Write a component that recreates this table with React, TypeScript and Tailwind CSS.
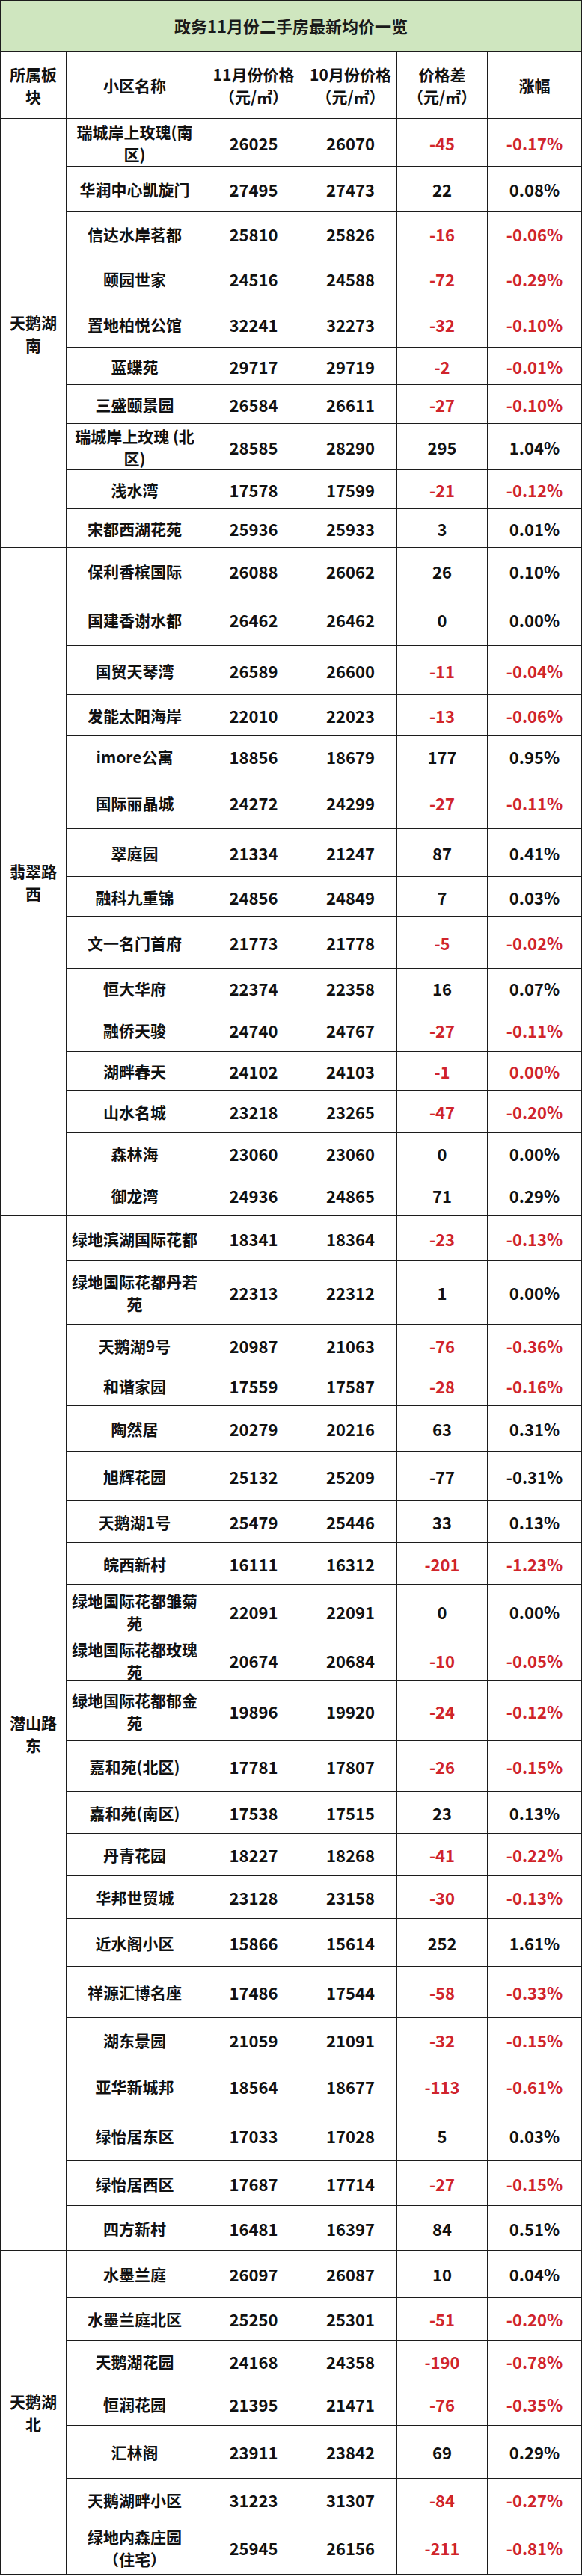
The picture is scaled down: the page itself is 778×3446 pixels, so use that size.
import React from 'react';

type Row = {
  name: string;
  nov: string;
  oct: string;
  diff: string;
  pct: string;
  red?: boolean;
  h: string;
};

type Group = {
  area: string;
  rows: Row[];
};

const groups: Group[] = [
  {
    area: '天鹅湖南',
    rows: [
      { name: '瑞城岸上玫瑰(南\n区)', nov: '26025', oct: '26070', diff: '-45', pct: '-0.17%', red: true, h: 'h-[64px]' },
      { name: '华润中心凯旋门', nov: '27495', oct: '27473', diff: '22', pct: '0.08%', h: 'h-[60px]' },
      { name: '信达水岸茗都', nov: '25810', oct: '25826', diff: '-16', pct: '-0.06%', red: true, h: 'h-[60px]' },
      { name: '颐园世家', nov: '24516', oct: '24588', diff: '-72', pct: '-0.29%', red: true, h: 'h-[60px]' },
      { name: '置地柏悦公馆', nov: '32241', oct: '32273', diff: '-32', pct: '-0.10%', red: true, h: 'h-[62px]' },
      { name: '蓝蝶苑', nov: '29717', oct: '29719', diff: '-2', pct: '-0.01%', red: true, h: 'h-[50px]' },
      { name: '三盛颐景园', nov: '26584', oct: '26611', diff: '-27', pct: '-0.10%', red: true, h: 'h-[52px]' },
      { name: '瑞城岸上玫瑰 (北\n区)', nov: '28585', oct: '28290', diff: '295', pct: '1.04%', h: 'h-[62px]' },
      { name: '浅水湾', nov: '17578', oct: '17599', diff: '-21', pct: '-0.12%', red: true, h: 'h-[52px]' },
      { name: '宋都西湖花苑', nov: '25936', oct: '25933', diff: '3', pct: '0.01%', h: 'h-[52px]' },
    ],
  },
  {
    area: '翡翠路西',
    rows: [
      { name: '保利香槟国际', nov: '26088', oct: '26062', diff: '26', pct: '0.10%', h: 'h-[62px]' },
      { name: '国建香谢水都', nov: '26462', oct: '26462', diff: '0', pct: '0.00%', h: 'h-[69px]' },
      { name: '国贸天琴湾', nov: '26589', oct: '26600', diff: '-11', pct: '-0.04%', red: true, h: 'h-[66px]' },
      { name: '发能太阳海岸', nov: '22010', oct: '22023', diff: '-13', pct: '-0.06%', red: true, h: 'h-[54px]' },
      { name: 'imore公寓', nov: '18856', oct: '18679', diff: '177', pct: '0.95%', h: 'h-[56px]' },
      { name: '国际丽晶城', nov: '24272', oct: '24299', diff: '-27', pct: '-0.11%', red: true, h: 'h-[69px]' },
      { name: '翠庭园', nov: '21334', oct: '21247', diff: '87', pct: '0.41%', h: 'h-[64px]' },
      { name: '融科九重锦', nov: '24856', oct: '24849', diff: '7', pct: '0.03%', h: 'h-[54px]' },
      { name: '文一名门首府', nov: '21773', oct: '21778', diff: '-5', pct: '-0.02%', red: true, h: 'h-[69px]' },
      { name: '恒大华府', nov: '22374', oct: '22358', diff: '16', pct: '0.07%', h: 'h-[53px]' },
      { name: '融侨天骏', nov: '24740', oct: '24767', diff: '-27', pct: '-0.11%', red: true, h: 'h-[58px]' },
      { name: '湖畔春天', nov: '24102', oct: '24103', diff: '-1', pct: '0.00%', red: true, h: 'h-[52px]' },
      { name: '山水名城', nov: '23218', oct: '23265', diff: '-47', pct: '-0.20%', red: true, h: 'h-[56px]' },
      { name: '森林海', nov: '23060', oct: '23060', diff: '0', pct: '0.00%', h: 'h-[56px]' },
      { name: '御龙湾', nov: '24936', oct: '24865', diff: '71', pct: '0.29%', h: 'h-[56px]' },
    ],
  },
  {
    area: '潜山路东',
    rows: [
      { name: '绿地滨湖国际花都', nov: '18341', oct: '18364', diff: '-23', pct: '-0.13%', red: true, h: 'h-[60px]' },
      { name: '绿地国际花都丹若\n苑', nov: '22313', oct: '22312', diff: '1', pct: '0.00%', h: 'h-[85px]' },
      { name: '天鹅湖9号', nov: '20987', oct: '21063', diff: '-76', pct: '-0.36%', red: true, h: 'h-[56px]' },
      { name: '和谐家园', nov: '17559', oct: '17587', diff: '-28', pct: '-0.16%', red: true, h: 'h-[53px]' },
      { name: '陶然居', nov: '20279', oct: '20216', diff: '63', pct: '0.31%', h: 'h-[61px]' },
      { name: '旭辉花园', nov: '25132', oct: '25209', diff: '-77', pct: '-0.31%', h: 'h-[66px]' },
      { name: '天鹅湖1号', nov: '25479', oct: '25446', diff: '33', pct: '0.13%', h: 'h-[56px]' },
      { name: '皖西新村', nov: '16111', oct: '16312', diff: '-201', pct: '-1.23%', red: true, h: 'h-[56px]' },
      { name: '绿地国际花都雏菊\n苑', nov: '22091', oct: '22091', diff: '0', pct: '0.00%', h: 'h-[73px]' },
      { name: '绿地国际花都玫瑰\n苑', nov: '20674', oct: '20684', diff: '-10', pct: '-0.05%', red: true, h: 'h-[56px]' },
      { name: '绿地国际花都郁金\n苑', nov: '19896', oct: '19920', diff: '-24', pct: '-0.12%', red: true, h: 'h-[80px]' },
      { name: '嘉和苑(北区)', nov: '17781', oct: '17807', diff: '-26', pct: '-0.15%', red: true, h: 'h-[68px]' },
      { name: '嘉和苑(南区)', nov: '17538', oct: '17515', diff: '23', pct: '0.13%', h: 'h-[56px]' },
      { name: '丹青花园', nov: '18227', oct: '18268', diff: '-41', pct: '-0.22%', red: true, h: 'h-[56px]' },
      { name: '华邦世贸城', nov: '23128', oct: '23158', diff: '-30', pct: '-0.13%', red: true, h: 'h-[58px]' },
      { name: '近水阁小区', nov: '15866', oct: '15614', diff: '252', pct: '1.61%', h: 'h-[64px]' },
      { name: '祥源汇博名座', nov: '17486', oct: '17544', diff: '-58', pct: '-0.33%', red: true, h: 'h-[68px]' },
      { name: '湖东景园', nov: '21059', oct: '21091', diff: '-32', pct: '-0.15%', red: true, h: 'h-[60px]' },
      { name: '亚华新城邦', nov: '18564', oct: '18677', diff: '-113', pct: '-0.61%', red: true, h: 'h-[64px]' },
      { name: '绿怡居东区', nov: '17033', oct: '17028', diff: '5', pct: '0.03%', h: 'h-[68px]' },
      { name: '绿怡居西区', nov: '17687', oct: '17714', diff: '-27', pct: '-0.15%', red: true, h: 'h-[60px]' },
      { name: '四方新村', nov: '16481', oct: '16397', diff: '84', pct: '0.51%', h: 'h-[60px]' },
    ],
  },
  {
    area: '天鹅湖北',
    rows: [
      { name: '水墨兰庭', nov: '26097', oct: '26087', diff: '10', pct: '0.04%', h: 'h-[63px]' },
      { name: '水墨兰庭北区', nov: '25250', oct: '25301', diff: '-51', pct: '-0.20%', red: true, h: 'h-[57px]' },
      { name: '天鹅湖花园', nov: '24168', oct: '24358', diff: '-190', pct: '-0.78%', red: true, h: 'h-[56px]' },
      { name: '恒润花园', nov: '21395', oct: '21471', diff: '-76', pct: '-0.35%', red: true, h: 'h-[58px]' },
      { name: '汇林阁', nov: '23911', oct: '23842', diff: '69', pct: '0.29%', h: 'h-[71px]' },
      { name: '天鹅湖畔小区', nov: '31223', oct: '31307', diff: '-84', pct: '-0.27%', red: true, h: 'h-[57px]' },
      { name: '绿地内森庄园\n（住宅）', nov: '25945', oct: '26156', diff: '-211', pct: '-0.81%', red: true, h: 'h-[71px]' },
    ],
  },
];

const cell = 'flex items-center justify-center text-center border-r border-b border-[#1c1c1c] whitespace-pre-line leading-[30px]';

function DataRow({ row }: { row: Row }) {
  const tone = row.red ? 'text-[#d0242b]' : 'text-[#111]';
  return (
    <div className={`flex ${row.h}`}>
      <div className={`${cell} w-[183px] text-[21px] text-[#111]`}>{row.name}</div>
      <div className={`${cell} w-[135px] text-[22px] text-[#111]`}>{row.nov}</div>
      <div className={`${cell} w-[124px] text-[22px] text-[#111]`}>{row.oct}</div>
      <div className={`${cell} w-[121px] text-[22px] ${tone}`}>{row.diff}</div>
      <div className={`${cell} w-[126px] text-[22px] ${tone}`}>{row.pct}</div>
    </div>
  );
}

export default function App() {
  return (
    <div className="w-[778px] bg-white font-['Noto_Sans_CJK_SC','Noto_Sans',sans-serif] font-bold">
      <div className="border-l border-t border-[#1c1c1c]">
        <div className="h-[68px] flex items-center justify-center bg-[#cfe6bf] border-r border-b border-[#1c1c1c] text-[22px] text-[#1a1a1a]">
          政务11月份二手房最新均价一览
        </div>

        <div className="flex h-[90px] text-[21px] text-[#111]">
          <div className={`${cell} w-[88px]`}>{'所属板\n块'}</div>
          <div className={`${cell} w-[183px]`}>小区名称</div>
          <div className={`${cell} w-[135px]`}>{'11月份价格\n（元/㎡）'}</div>
          <div className={`${cell} w-[124px]`}>{'10月份价格\n（元/㎡）'}</div>
          <div className={`${cell} w-[121px]`}>{'价格差\n（元/㎡）'}</div>
          <div className={`${cell} w-[126px]`}>涨幅</div>
        </div>

        {groups.map((g) => (
          <div key={g.area} className="flex">
            <div className={`${cell} w-[88px] text-[21px] text-[#111]`}>
              {g.area.slice(0, 3) + '\n' + g.area.slice(3)}
            </div>
            <div className="flex flex-col">
              {g.rows.map((r) => (
                <DataRow key={r.name} row={r} />
              ))}
            </div>
          </div>
        ))}
      </div>
    </div>
  );
}
